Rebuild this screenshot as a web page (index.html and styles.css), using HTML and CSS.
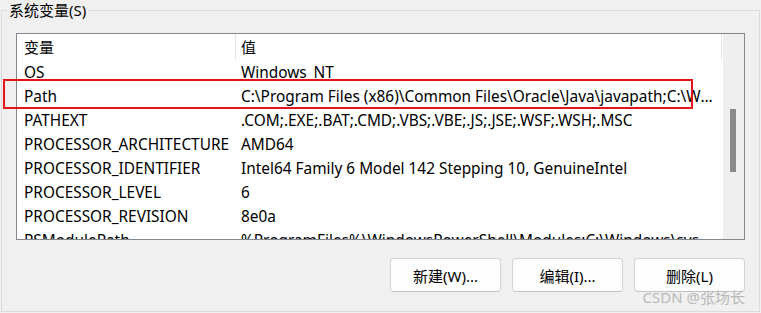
FILE: index.html
```html
<!DOCTYPE html>
<html>
<head>
<meta charset="utf-8">
	<title>系统变量</title>
	<link rel="stylesheet" href="styles.css">
</head>
<body>
	<fieldset class="group">
		<legend>系统变量(S)</legend>
		<div class="listbox">
			<div class="list">
				<div class="row head"><div class="name">变量</div><div class="value">值</div></div>
				<div class="row"><div class="name">OS</div><div class="value">Windows_NT</div></div>
				<div class="row"><div class="name">Path</div><div class="value">C:\Program Files (x86)\Common Files\Oracle\Java\javapath;C:\Windows\system32;C:\Windows</div></div>
				<div class="row"><div class="name">PATHEXT</div><div class="value">.COM;.EXE;.BAT;.CMD;.VBS;.VBE;.JS;.JSE;.WSF;.WSH;.MSC</div></div>
				<div class="row"><div class="name">PROCESSOR_ARCHITECTURE</div><div class="value">AMD64</div></div>
				<div class="row"><div class="name">PROCESSOR_IDENTIFIER</div><div class="value">Intel64 Family 6 Model 142 Stepping 10, GenuineIntel</div></div>
				<div class="row"><div class="name">PROCESSOR_LEVEL</div><div class="value">6</div></div>
				<div class="row"><div class="name">PROCESSOR_REVISION</div><div class="value">8e0a</div></div>
				<div class="row"><div class="name">PSModulePath</div><div class="value">%ProgramFiles%\WindowsPowerShell\Modules;C:\Windows\system32\WindowsPowerShell\v1.0\Modules</div></div>
			</div>
			<div class="scrollbar"><div class="thumb"></div></div>
		</div>
		<div class="buttons">
			<button>新建(W)...</button>
			<button>编辑(I)...</button>
			<button>删除(L)</button>
		</div>
	</fieldset>
	<!-- 红框标注 -->
	<div class="mark"></div>
	<div class="watermark">CSDN @张场长</div>
</body>
</html>
```

FILE: styles.css
```css
*{
	margin: 0;
	padding: 0;
	box-sizing: border-box;
}
body{
	width: 761px;
	height: 313px;
	background: #f0f0f0;
	font-family: "Noto Sans", "Noto Sans CJK SC", sans-serif;
	font-size: 15px;
	color: #000;
	position: relative;
	overflow: hidden;
}
.group{
	width: 759px;
	height: 312px;
	margin-left: 1px;
	border: 1px solid #dcdcdc;
	padding: 0;
}
.group legend{
	margin-left: 5px;
	padding: 0 2px;
	line-height: 20px;
	height: 20px;
	font-size: 15px;
}
.listbox{
	margin: 13px 14px 0 14px;
	height: 207px;
	border: 1px solid #828790;
	background: #fff;
	display: flex;
	overflow: hidden;
}
.list{
	width: 706px;
	overflow: hidden;
}
.row{
	display: flex;
	height: 24px;
	line-height: 25px;
	white-space: nowrap;
	font-size: 15.4px;
}
.row .name{
	width: 219px;
	padding-left: 7px;
	overflow: hidden;
}
.row .value{
	width: 486px;
	padding-left: 5px;
	padding-right: 9px;
	overflow: hidden;
	text-overflow: ellipsis;
}
.row.head{
	height: 26px;
	line-height: 26px;
	font-size: 15px;
}
.row.head .name,.row.head .value{
	border-right: 1px solid #e5e5e5;
}
.scrollbar{
	width: 21px;
	background: #efefef;
	padding: 75px 0 0 7px;
}
.thumb{
	width: 6px;
	height: 63px;
	background: #8a8a8a;
}
.buttons{
	display: flex;
	justify-content: flex-end;
	gap: 11px;
	margin: 18px 14px 0 0;
}
.buttons button{
	width: 111px;
	height: 34px;
	font-family: inherit;
	font-size: 15px;
	color: #000;
	background: #fdfdfd;
	border: 1px solid #d3d3d3;
	border-bottom-color: #c4c4c4;
	border-radius: 4px;
}
.mark{
	position: absolute;
	left: 3px;
	top: 79px;
	width: 690px;
	height: 30px;
	border: 2px solid #e5141c;
}
.watermark{
	position: absolute;
	right: 16px;
	top: 286px;
	font-size: 15px;
	color: #b9b9b9;
	line-height: 22px;
}
```
